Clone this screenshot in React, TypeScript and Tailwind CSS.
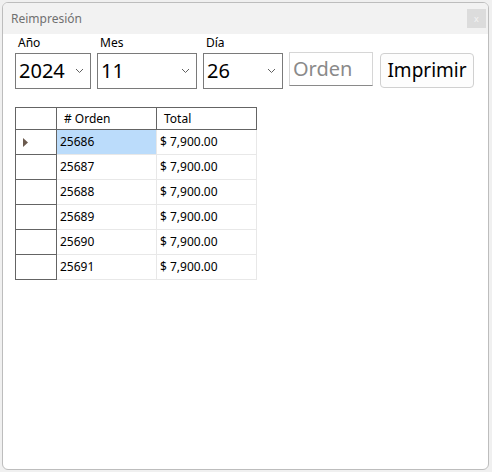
import React from "react";

const rows = ["25686", "25687", "25688", "25689", "25690", "25691"];

const Chevron = () => (
	<svg width="9" height="6" viewBox="0 0 9 6" className="shrink-0">
		<path d="M1 1 L4.5 4.5 L8 1" fill="none" stroke="#606060" strokeWidth="1" />
	</svg>
);

const Combo = ({ label, value, width }: { label: string; value: string; width: string }) => (
	<div className="flex flex-col">
		<span className="pl-[3px] text-[12px] leading-[14px] text-black">{label}</span>
		<div
			className={`mt-[3px] flex h-[36px] items-center justify-between border border-[#7a7a7a] bg-white pr-[6px] pl-[3px] ${width}`}
		>
			<span className="text-[20px] leading-none text-black">{value}</span>
			<Chevron />
		</div>
	</div>
);

export default function App() {
	return (
		<div
			className="h-[472px] w-[492px] bg-[#f0f0f0] pt-[2px] pl-[2px]"
			style={{ fontFamily: '"Noto Sans", "Open Sans", sans-serif' }}
		>
			<div className="flex h-[468px] w-[487px] flex-col overflow-hidden rounded-[6px] border border-[#bdbdbd] bg-white">
				<div className="flex h-[31px] shrink-0 items-center justify-between bg-[#f2f2f2] pl-[8px] pr-[2px]">
					<span className="text-[12px] text-[#707070]">Reimpresión</span>
					<div className="flex h-[19px] w-[19px] items-center justify-center bg-[#dcdcdc] text-[9px] leading-none text-[#f4f4f4]">
						x
					</div>
				</div>
				<div className="flex flex-col px-[12px] pt-[2px]">
					<div className="flex items-start gap-[6px]">
						<Combo label="Año" value="2024" width="w-[76px]" />
						<Combo label="Mes" value="11" width="w-[100px]" />
						<Combo label="Día" value="26" width="w-[80px]" />
						<div className="mt-[16px] flex h-[34px] w-[84px] items-center border border-[#d6d6d6] border-b-[#8a8a8a] bg-white pl-[3px]">
							<span className="text-[20px] leading-none text-[#8a8a8a]">Orden</span>
						</div>
						<button className="mt-[17px] ml-[1px] flex h-[35px] w-[94px] items-center justify-center rounded-[4px] border border-[#d0d0d0] bg-[#fdfdfd] text-[19px] leading-none text-black">
							Imprimir
						</button>
					</div>
					<table className="mt-[18px] w-[241px] table-fixed border-collapse text-[12px] text-black">
						<colgroup>
							<col className="w-[41px]" />
							<col className="w-[100px]" />
							<col className="w-[100px]" />
						</colgroup>
						<thead>
							<tr className="h-[22px]">
								<th className="border border-[#646464] bg-white" />
								<th className="border border-[#646464] bg-white pl-[7px] text-left font-normal">
									# Orden
								</th>
								<th className="border border-[#646464] bg-white pl-[7px] text-left font-normal">
									Total
								</th>
							</tr>
						</thead>
						<tbody>
							{rows.map((id, i) => (
								<tr key={id} className="h-[25px]">
									<td className="border border-[#646464] bg-white pl-[7px]">
										{i === 0 ? (
											<svg width="5" height="9" viewBox="0 0 5 9">
												<path d="M0 0 L5 4.5 L0 9 Z" fill="#6b5a4e" />
											</svg>
										) : null}
									</td>
									<td
										className={`border border-[#e8e8e8] pl-[3px] ${i === 0 ? "bg-[#bbdcfb]" : "bg-white"}`}
									>
										{id}
									</td>
									<td className="border border-[#e8e8e8] bg-white pl-[3px]">$ 7,900.00</td>
								</tr>
							))}
						</tbody>
					</table>
				</div>
			</div>
		</div>
	);
}
